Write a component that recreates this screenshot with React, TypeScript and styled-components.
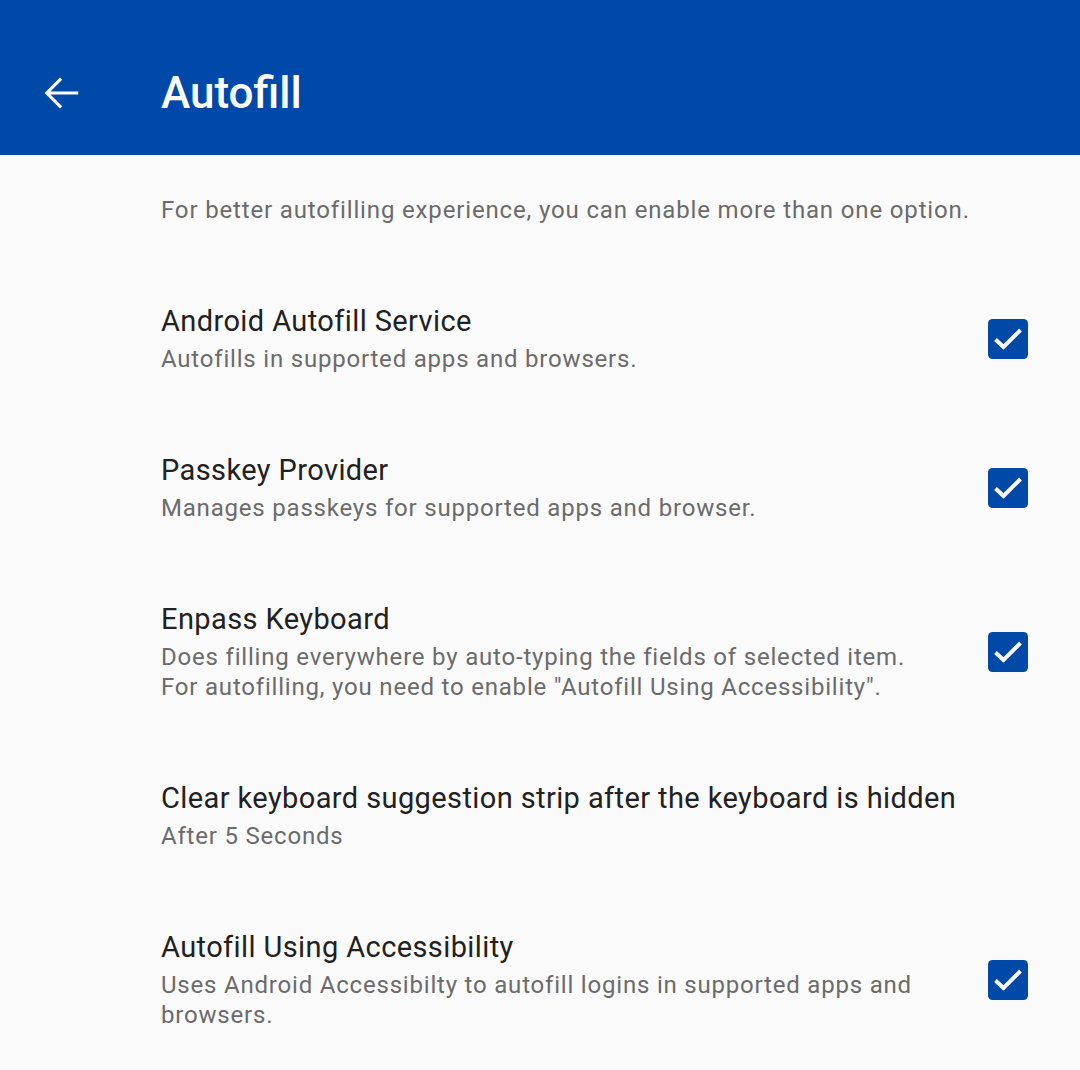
import React, { useState } from 'react';
import styled, { createGlobalStyle } from 'styled-components';

const GlobalStyle = createGlobalStyle`
  html, body {
    margin: 0;
    padding: 0;
    background: #fafafa;
    font-family: Roboto, "Noto Sans", "Liberation Sans", sans-serif;
  }
`;

const Page = styled.div`
  width: 1080px;
  min-height: 1070px;
  background: #fafafa;
`;

const AppBar = styled.header`
  height: 155px;
  background: #0049a9;
  display: flex;
  align-items: center;
  padding: 31px 0 0 36px;
  box-sizing: border-box;
`;

const BackButton = styled.button`
  width: 52px;
  height: 52px;
  padding: 0;
  border: none;
  background: transparent;
  display: flex;
  align-items: center;
  justify-content: center;
  cursor: pointer;
`;

const Title = styled.h1`
  margin: 0 0 0 73px;
  color: #ffffff;
  font-size: 44px;
  font-weight: 500;
  line-height: 52px;
`;

const Content = styled.main`
  padding: 40px 52px 0 161px;
`;

const Intro = styled.p`
  margin: 0 0 40px;
  font-size: 24px;
  line-height: 30px;
  letter-spacing: 0.85px;
  color: #6b6b6b;
`;

const Row = styled.div`
  display: flex;
  align-items: center;
  gap: 30px;
  padding: 38px 0 40px;
`;

const Texts = styled.div`
  flex: 1;
  min-width: 0;
`;

const RowTitle = styled.div`
  font-size: 29px;
  line-height: 36px;
  letter-spacing: 0.4px;
  color: #212121;
  margin-bottom: 5px;
`;

const RowSub = styled.div`
  font-size: 24px;
  line-height: 30px;
  letter-spacing: 0.8px;
  color: #6b6b6b;
  white-space: pre-line;
`;

const CheckButton = styled.button`
  width: 40px;
  height: 40px;
  padding: 0;
  border: none;
  background: transparent;
  cursor: pointer;
  flex-shrink: 0;
`;

const ArrowBack = () => (
  <svg width="52" height="52" viewBox="0 0 24 24">
    <path
      d="M19.5 12H5.2M11.6 5.4 5 12l6.6 6.6"
      fill="none"
      stroke="#ffffff"
      strokeWidth="1.45"
    />
  </svg>
);

const CheckBox = ({ on }: { on: boolean }) => (
  <svg width="40" height="40" viewBox="0 0 40 40">
    {on ? (
      <>
        <rect x="0" y="0" width="40" height="40" rx="4.5" fill="#0049a9" />
        <polyline
          points="7.5,20.5 15.5,28 32.5,11"
          fill="none"
          stroke="#ffffff"
          strokeWidth="4"
        />
      </>
    ) : (
      <rect x="2" y="2" width="36" height="36" rx="3" fill="none" stroke="#666" strokeWidth="4" />
    )}
  </svg>
);

interface Option {
  title: string;
  sub: string;
  check?: boolean;
}

const options: Option[] = [
  { title: 'Android Autofill Service', sub: 'Autofills in supported apps and browsers.', check: true },
  { title: 'Passkey Provider', sub: 'Manages passkeys for supported apps and browser.', check: true },
  {
    title: 'Enpass Keyboard',
    sub: 'Does filling everywhere by auto-typing the fields of selected item.\nFor autofilling, you need to enable "Autofill Using Accessibility".',
    check: true,
  },
  { title: 'Clear keyboard suggestion strip after the keyboard is hidden', sub: 'After 5 Seconds' },
  {
    title: 'Autofill Using Accessibility',
    sub: 'Uses Android Accessibilty to autofill logins in supported apps and browsers.',
    check: true,
  },
];

const App: React.FC = () => {
  const [checked, setChecked] = useState<boolean[]>(options.map((o) => !!o.check));

  const toggle = (i: number) => {
    setChecked((prev) => prev.map((v, j) => (j === i ? !v : v)));
  };

  return (
    <Page>
      <GlobalStyle />
      <AppBar>
        <BackButton aria-label="Back">
          <ArrowBack />
        </BackButton>
        <Title>Autofill</Title>
      </AppBar>
      <Content>
        <Intro>For better autofilling experience, you can enable more than one option.</Intro>
        {options.map((o, i) => (
          <Row key={o.title}>
            <Texts>
              <RowTitle>{o.title}</RowTitle>
              <RowSub>{o.sub}</RowSub>
            </Texts>
            {o.check !== undefined && (
              <CheckButton onClick={() => toggle(i)} aria-label={o.title}>
                <CheckBox on={checked[i]} />
              </CheckButton>
            )}
          </Row>
        ))}
      </Content>
    </Page>
  );
};

export default App;
